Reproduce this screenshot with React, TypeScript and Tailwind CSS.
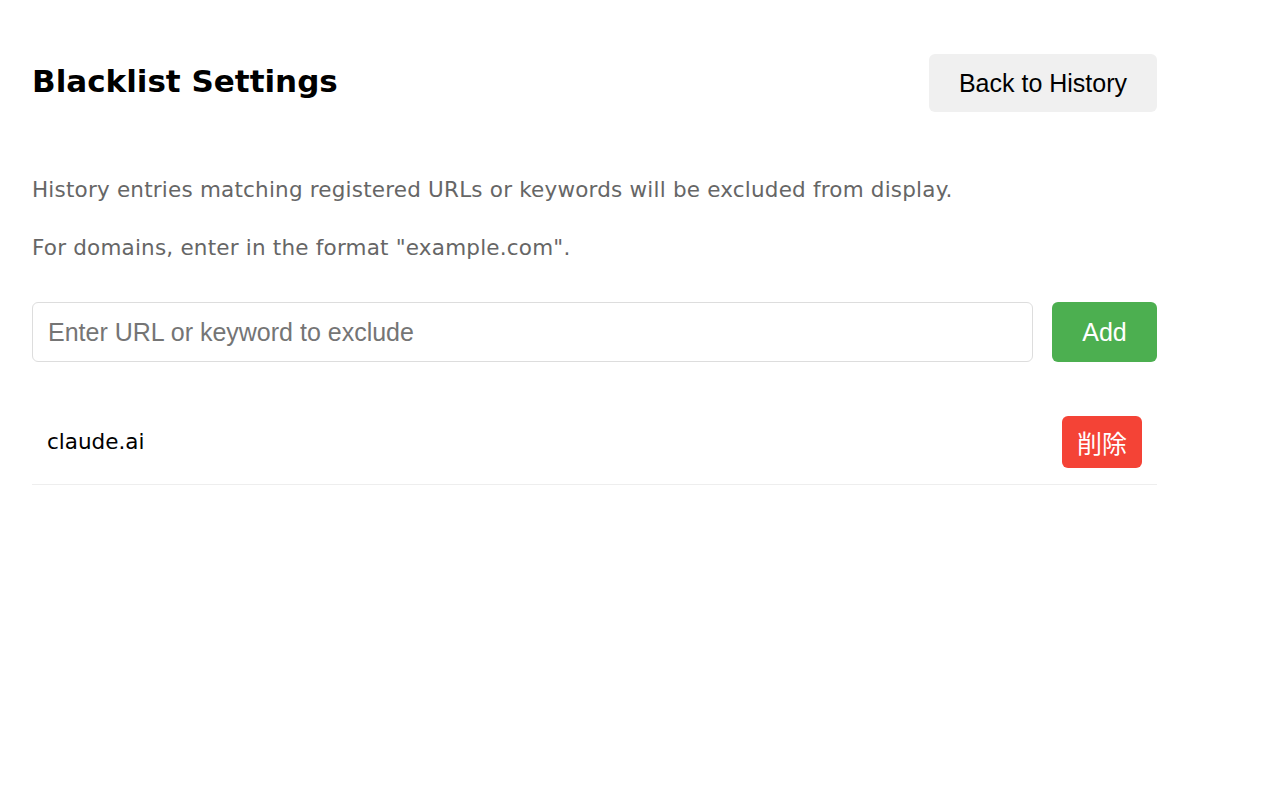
import React, { useState } from 'react';

const meiryo = "font-['DejaVu_Sans','Noto_Sans_CJK_JP',sans-serif]";
const arial = "font-['Liberation_Sans','Noto_Sans_CJK_JP',sans-serif]";

const App = () => {
  const [items, setItems] = useState<string[]>(['claude.ai']);
  const [value, setValue] = useState('');

  const add = () => {
    const v = value.trim();
    if (!v) return;
    setItems([...items, v]);
    setValue('');
  };

  return (
    <div className="min-h-screen bg-white">
      <div className="w-[1125px] ml-[32px] pt-[54px]">
        {/* Header */}
        <div className="flex items-center justify-between h-[58px]">
          <h1 className={`${meiryo} text-[31px] font-bold text-black leading-none -mt-[3px]`}>Blacklist Settings</h1>
          <button
            className={`${arial} h-[58px] w-[228px] rounded-[6px] bg-[#f0f0f0] pt-[2px] text-[25px] text-black`}
          >
            Back to History
          </button>
        </div>

        {/* Description */}
        <p className={`${meiryo} mt-[63px] text-[21.5px] tracking-[0.2px] leading-[30px] text-[#666]`}>
          History entries matching registered URLs or keywords will be excluded from display.
        </p>
        <p className={`${meiryo} mt-[28px] text-[21.5px] tracking-[0.2px] leading-[30px] text-[#666]`}>
          For domains, enter in the format "example.com".
        </p>

        {/* Input */}
        <div className="mt-[39px] flex gap-[19px]">
          <input
            value={value}
            onChange={(e) => setValue(e.target.value)}
            placeholder="Enter URL or keyword to exclude"
            className={`${arial} h-[60px] flex-1 rounded-[6px] border border-[#ddd] px-[15px] text-[25px] text-black outline-none placeholder:text-[#757575]`}
          />
          <button
            onClick={add}
            className={`${arial} h-[60px] w-[105px] rounded-[6px] bg-[#4caf50] pt-[2px] text-[25px] text-white`}
          >
            Add
          </button>
        </div>

        {/* List */}
        <ul className="mt-[42px]">
          {items.map((item, i) => (
            <li
              key={i}
              className="flex items-center justify-between border-b border-[#eee] pl-[15px] pr-[15px] pt-[12px] pb-[16px]"
            >
              <span className={`${meiryo} text-[21.5px] text-black`}>{item}</span>
              <button
                onClick={() => setItems(items.filter((_, j) => j !== i))}
                className="h-[52px] w-[80px] rounded-[6px] bg-[#f44336] font-['Noto_Sans_CJK_JP',sans-serif] text-[25px] leading-none text-white"
              >
                削除
              </button>
            </li>
          ))}
        </ul>
      </div>
    </div>
  );
};

export default App;
